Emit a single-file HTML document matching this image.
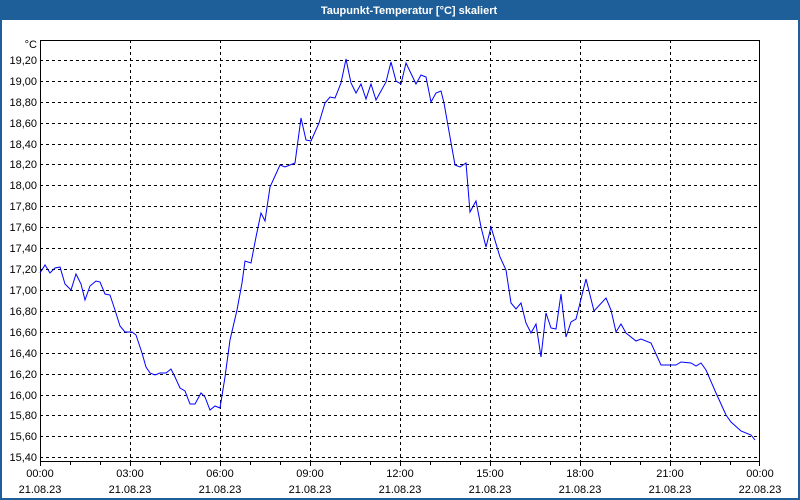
<!DOCTYPE html>
<html><head><meta charset="utf-8"><style>
html,body{margin:0;padding:0;width:800px;height:500px;overflow:hidden;background:#fff}
svg{display:block}
text{font-family:"Liberation Sans",sans-serif;font-size:11px;fill:#000}
</style></head><body>
<svg width="800" height="500" xmlns="http://www.w3.org/2000/svg">
<rect x="0" y="0" width="800" height="500" fill="#1e5f99"/>
<rect x="2" y="20" width="796" height="478" fill="#fff"/>
<text x="409" y="14" text-anchor="middle" style="fill:#fff;font-weight:bold;font-size:11px">Taupunkt-Temperatur [°C] skaliert</text>
<g stroke="#000" stroke-width="1" stroke-dasharray="3,3" shape-rendering="crispEdges">
<path d="M40 60.5H760M40 81.5H760M40 102.5H760M40 123.5H760M40 144.5H760M40 164.5H760M40 185.5H760M40 206.5H760M40 227.5H760M40 248.5H760M40 269.5H760M40 290.5H760M40 311.5H760M40 332.5H760M40 353.5H760M40 374.5H760M40 395.5H760M40 415.5H760M40 436.5H760M40 457.5H760"/>
<path d="M130.5 40V461M220.5 40V461M310.5 40V461M400.5 40V461M490.5 40V461M580.5 40V461M670.5 40V461"/>
</g>
<g stroke="#000" stroke-width="1" fill="none" shape-rendering="crispEdges">
<path d="M40.5 40V461M40 40.5H760M759.5 40V461M40 461.5H760"/>
<path d="M40.5 461V466M70.5 461V465M100.5 461V465M130.5 461V466M160.5 461V465M190.5 461V465M220.5 461V466M250.5 461V465M280.5 461V465M310.5 461V466M340.5 461V465M370.5 461V465M400.5 461V466M430.5 461V465M460.5 461V465M490.5 461V466M520.5 461V465M550.5 461V465M580.5 461V466M610.5 461V465M640.5 461V465M670.5 461V466M700.5 461V465M730.5 461V465M759.5 461V466"/>
</g>
<polyline fill="none" stroke="#0000ff" stroke-width="1" points="40,273 45,265 50,273 55,268 60,267 65,284 71,290 76,274 81,284 85,300 90,286 96,281 100,282 105,294 110,295 115,310 120,326 125,332 132,332 136,335 142,353 146,367 150,373 155,375 160,373 166,373 171,369 175,377 180,388 185,391 190,404 195,404 201,393 205,397 210,410 215,406 220,408 225,377 230,340 237,310 242,283 245,261 251,263 256,237 261,213 265,221 270,187 280,165 285,167 295,163 301,118 306,140 311,141 319,123 325,103 330,97 335,98 341,83 346,59 351,83 356,93 361,84 366,99 371,84 376,100 386,82 391,62 396,81 401,84 406,63 416,84 421,75 426,77 431,102 436,93 441,91 444,103 450,137 455,165 460,167 466,163 470,212 476,201 481,227 486,247 491,227 500,257 506,270 511,303 516,309 521,303 526,323 531,333 536,324 541,357 546,313 551,328 556,329 561,294 566,337 571,322 576,319 586,279 594,311 606,298 611,310 616,332 621,324 626,333 636,341 641,339 651,343 661,365 676,365 681,362 691,363 696,366 701,363 706,370 716,393 726,415 731,422 741,431 751,435 755,440"/>
<g text-anchor="end">
<text x="37" y="48">°C</text>
<text x="37" y="64">19,20</text><text x="37" y="85">19,00</text><text x="37" y="106">18,80</text><text x="37" y="127">18,60</text><text x="37" y="148">18,40</text><text x="37" y="168">18,20</text><text x="37" y="189">18,00</text><text x="37" y="210">17,80</text><text x="37" y="231">17,60</text><text x="37" y="252">17,40</text><text x="37" y="273">17,20</text><text x="37" y="294">17,00</text><text x="37" y="315">16,80</text><text x="37" y="336">16,60</text><text x="37" y="357">16,40</text><text x="37" y="378">16,20</text><text x="37" y="399">16,00</text><text x="37" y="419">15,80</text><text x="37" y="440">15,60</text><text x="37" y="461">15,40</text>
</g>
<g text-anchor="middle">
<text x="40" y="477">00:00</text><text x="40" y="493">21.08.23</text>
<text x="130" y="477">03:00</text><text x="130" y="493">21.08.23</text>
<text x="220" y="477">06:00</text><text x="220" y="493">21.08.23</text>
<text x="310" y="477">09:00</text><text x="310" y="493">21.08.23</text>
<text x="400" y="477">12:00</text><text x="400" y="493">21.08.23</text>
<text x="490" y="477">15:00</text><text x="490" y="493">21.08.23</text>
<text x="580" y="477">18:00</text><text x="580" y="493">21.08.23</text>
<text x="670" y="477">21:00</text><text x="670" y="493">21.08.23</text>
<text x="760" y="477">00:00</text><text x="760" y="493">22.08.23</text>
</g>
</svg>
</body></html>
